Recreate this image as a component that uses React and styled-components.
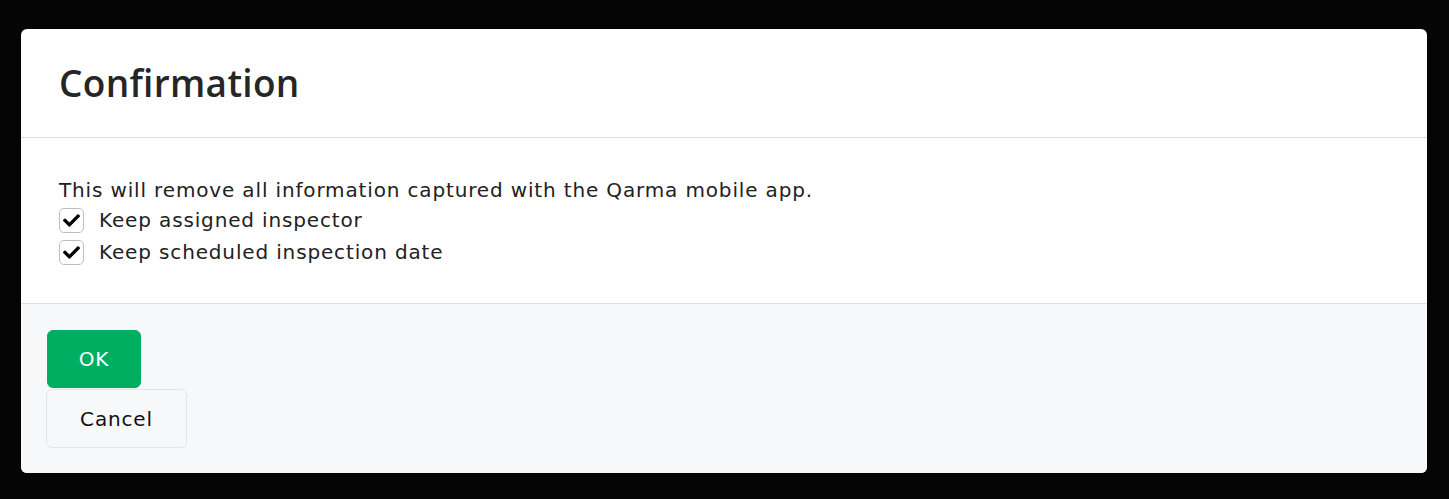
import React from 'react';
import styled, { createGlobalStyle } from 'styled-components';
import { FaCheck } from 'react-icons/fa';

const GlobalStyle = createGlobalStyle`
  html, body {
    margin: 0;
    padding: 0;
    background: #050505;
    font-family: "DejaVu Sans", "Open Sans", sans-serif;
  }
`;

const Backdrop = styled.div`
  width: 1449px;
  height: 499px;
  box-sizing: border-box;
  padding: 29px 22px 0 21px;
  background: #050505;
`;

const Modal = styled.div`
  background: #fff;
  border-radius: 6px;
  overflow: hidden;
  display: flex;
  flex-direction: column;
`;

const Header = styled.div`
  height: 109px;
  box-sizing: border-box;
  display: flex;
  align-items: center;
  padding: 0 38px 2px;
  border-bottom: 1px solid #dedede;
`;

const Title = styled.h1`
  margin: 0;
  font-family: "Open Sans", sans-serif;
  font-size: 37px;
  font-weight: 600;
  letter-spacing: 0.3px;
  color: #262626;
`;

const Body = styled.div`
  padding: 38px 38px 35px;
  border-bottom: 1px solid #dedede;
  color: #222;
  font-size: 20px;
  letter-spacing: 0.85px;
`;

const Text = styled.p`
  margin: 0;
  line-height: 28px;
`;

const Option = styled.label`
  display: flex;
  align-items: center;
  gap: 15px;
  height: 32px;
`;

const Box = styled.span`
  width: 25px;
  height: 25px;
  box-sizing: border-box;
  border: 1px solid #bdbdbd;
  border-radius: 5px;
  display: flex;
  align-items: center;
  justify-content: center;
  background: #fff;
  color: #000;
`;

const Footer = styled.div`
  background: #f7f8fa;
  padding: 26px 25px 25px;
  display: flex;
  flex-direction: column;
  align-items: flex-start;
  gap: 1px;
`;

const Button = styled.button`
  font-family: inherit;
  font-size: 20px;
  letter-spacing: 0.85px;
  width: ${p => p.$primary ? '94px' : '141px'};
  height: ${p => p.$primary ? '58px' : '59px'};
  padding: 0;
  margin-left: ${p => p.$primary ? '1px' : '0'};
  border-radius: 6px;
  border: 1px solid ${p => p.$primary ? '#00ae62' : '#e3e5e9'};
  background: ${p => p.$primary ? '#00ae62' : '#f7f8fa'};
  color: ${p => p.$primary ? '#fff' : '#111'};
  cursor: pointer;
`;

function Check({ children }) {
  return (
    <Option>
      <Box><FaCheck size={17} /></Box>
      {children}
    </Option>
  );
}

export default function App() {
  return (
    <Backdrop>
      <GlobalStyle />
      <Modal>
        <Header>
          <Title>Confirmation</Title>
        </Header>
        <Body>
          <Text>This will remove all information captured with the Qarma mobile app.</Text>
          <Check>Keep assigned inspector</Check>
          <Check>Keep scheduled inspection date</Check>
        </Body>
        <Footer>
          <Button $primary>OK</Button>
          <Button>Cancel</Button>
        </Footer>
      </Modal>
    </Backdrop>
  );
}
